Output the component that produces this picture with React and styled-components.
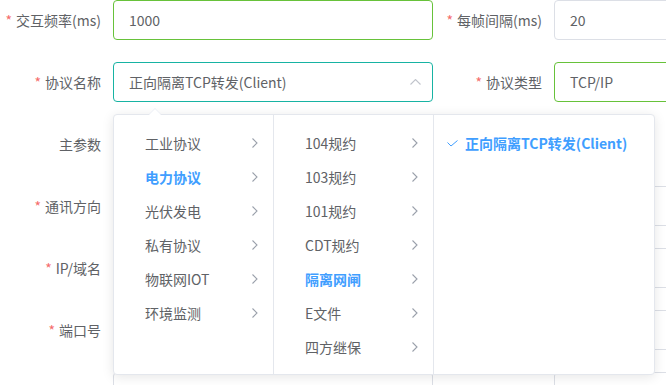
import React from "react";
import styled, { createGlobalStyle } from "styled-components";

const GlobalStyle = createGlobalStyle`
  html, body {
    margin: 0;
    padding: 0;
    background: #fff;
    overflow: hidden;
  }
  body {
    font-family: "Noto Sans CJK SC", "Noto Sans", sans-serif;
    font-size: 14px;
    color: #606266;
  }
`;

const Form = styled.div`
  width: 900px;
  height: 385px;
  overflow: hidden;
  display: flex;
  flex-direction: column;
  gap: 22px;
`;

const Row = styled.div`
  display: flex;
  flex: 0 0 40px;
  height: 40px;
`;

const Item = styled.div`
  display: flex;
  align-items: center;
  height: 40px;
`;

const Label = styled.label`
  width: ${(p) => p.$w}px;
  box-sizing: border-box;
  padding-right: 12px;
  text-align: right;
  font-size: 14px;
  color: #606266;
  white-space: nowrap;
  &::before {
    content: ${(p) => (p.$required ? '"*"' : "none")};
    color: #f56c6c;
    margin-right: 4px;
  }
`;

const borders = {
  green: "#67c23a",
  teal: "#17b3a3",
  gray: "#dcdfe6",
};

const Input = styled.div`
  position: relative;
  width: ${(p) => p.$w || 320}px;
  height: 40px;
  box-sizing: border-box;
  border: 1px solid ${(p) => borders[p.$tone || "gray"]};
  border-radius: 4px;
  padding: 0 15px;
  display: flex;
  align-items: center;
  font-size: 14px;
  color: #606266;
  background: #fff;
`;

const SelectArrow = styled.svg`
  position: absolute;
  right: 11px;
  top: 16px;
`;

const Panel = styled.div`
  position: absolute;
  top: 51px;
  left: -1px;
  z-index: 10;
  display: flex;
  background: #fff;
  border: 1px solid #e4e7ed;
  border-radius: 4px;
  box-shadow: 0 2px 12px 0 rgba(0, 0, 0, 0.1);

  &::before {
    content: "";
    position: absolute;
    top: -7px;
    left: 35px;
    border: 6px solid transparent;
    border-top-width: 0;
    border-bottom-color: #ebeef5;
  }
  &::after {
    content: "";
    position: absolute;
    top: -6px;
    left: 35px;
    border: 6px solid transparent;
    border-top-width: 0;
    border-bottom-color: #fff;
  }
`;

const Menu = styled.ul`
  list-style: none;
  margin: 0;
  padding: 11px 0 10px;
  width: ${(p) => p.$w}px;
  box-sizing: border-box;
  border-right: ${(p) => (p.$last ? "none" : "1px solid #e4e7ed")};
`;

const Node = styled.li`
  position: relative;
  height: 34px;
  line-height: 34px;
  padding: 0 15px 0 31px;
  display: flex;
  align-items: center;
  justify-content: space-between;
  font-size: 14px;
  white-space: nowrap;
  color: ${(p) => (p.$active ? "#409eff" : "#606266")};
  font-weight: ${(p) => (p.$active ? 700 : 400)};
`;

const Check = styled.svg`
  position: absolute;
  left: 13px;
  top: 14px;
`;

const Chevron = () => (
  <svg width="6" height="10" viewBox="0 0 6 10">
    <polyline points="0.5,0.5 5,5 0.5,9.5" fill="none" stroke="#9aa0ab" strokeWidth="1.1" />
  </svg>
);

const col1 = ["工业协议", "电力协议", "光伏发电", "私有协议", "物联网IOT", "环境监测"];
const col2 = ["104规约", "103规约", "101规约", "CDT规约", "隔离网闸", "E文件", "四方继保"];

const Cascader = () => (
  <Panel>
    <Menu $w={160}>
      {col1.map((t) => (
        <Node key={t} $active={t === "电力协议"}>
          <span>{t}</span>
          <Chevron />
        </Node>
      ))}
    </Menu>
    <Menu $w={160}>
      {col2.map((t) => (
        <Node key={t} $active={t === "隔离网闸"}>
          <span>{t}</span>
          <Chevron />
        </Node>
      ))}
    </Menu>
    <Menu $w={220} $last>
      <Node $active>
        <Check width="11" height="7" viewBox="0 0 11 7">
          <polyline points="0.5,2.5 4,6 10.5,0.5" fill="none" stroke="#409eff" strokeWidth="1" />
        </Check>
        <span>正向隔离TCP转发(Client)</span>
      </Node>
    </Menu>
  </Panel>
);

const App = () => (
  <>
    <GlobalStyle />
    <Form>
      <Row>
        <Item>
          <Label $w={113} $required>交互频率(ms)</Label>
          <Input $tone="green">1000</Input>
        </Item>
        <Item>
          <Label $w={121} $required>每帧间隔(ms)</Label>
          <Input>20</Input>
        </Item>
      </Row>
      <Row>
        <Item>
          <Label $w={113} $required>协议名称</Label>
          <Input $tone="teal">
            正向隔离TCP转发(Client)
            <SelectArrow width="11" height="6" viewBox="0 0 11 6">
              <polyline points="0.5,5.5 5.5,0.5 10.5,5.5" fill="none" stroke="#c0c4cc" strokeWidth="1.1" />
            </SelectArrow>
            <Cascader />
          </Input>
        </Item>
        <Item>
          <Label $w={121} $required>协议类型</Label>
          <Input $tone="green">TCP/IP</Input>
        </Item>
      </Row>
      <Row>
        <Item>
          <Label $w={113}>主参数</Label>
        </Item>
      </Row>
      <Row>
        <Item>
          <Label $w={113} $required>通讯方向</Label>
          <Input />
        </Item>
        <Item>
          <Label $w={121} $required>通讯模式</Label>
          <Input />
        </Item>
      </Row>
      <Row>
        <Item>
          <Label $w={113} $required>IP/域名</Label>
          <Input />
        </Item>
        <Item>
          <Label $w={121} $required>备用IP</Label>
          <Input />
        </Item>
      </Row>
      <Row>
        <Item>
          <Label $w={113} $required>端口号</Label>
          <Input />
        </Item>
        <Item>
          <Label $w={121} $required>本地端口</Label>
          <Input />
        </Item>
      </Row>
      <Row>
        <Item>
          <Label $w={113} />
          <Input />
        </Item>
        <Item>
          <Label $w={121} />
          <Input />
        </Item>
      </Row>
    </Form>
  </>
);

export default App;
